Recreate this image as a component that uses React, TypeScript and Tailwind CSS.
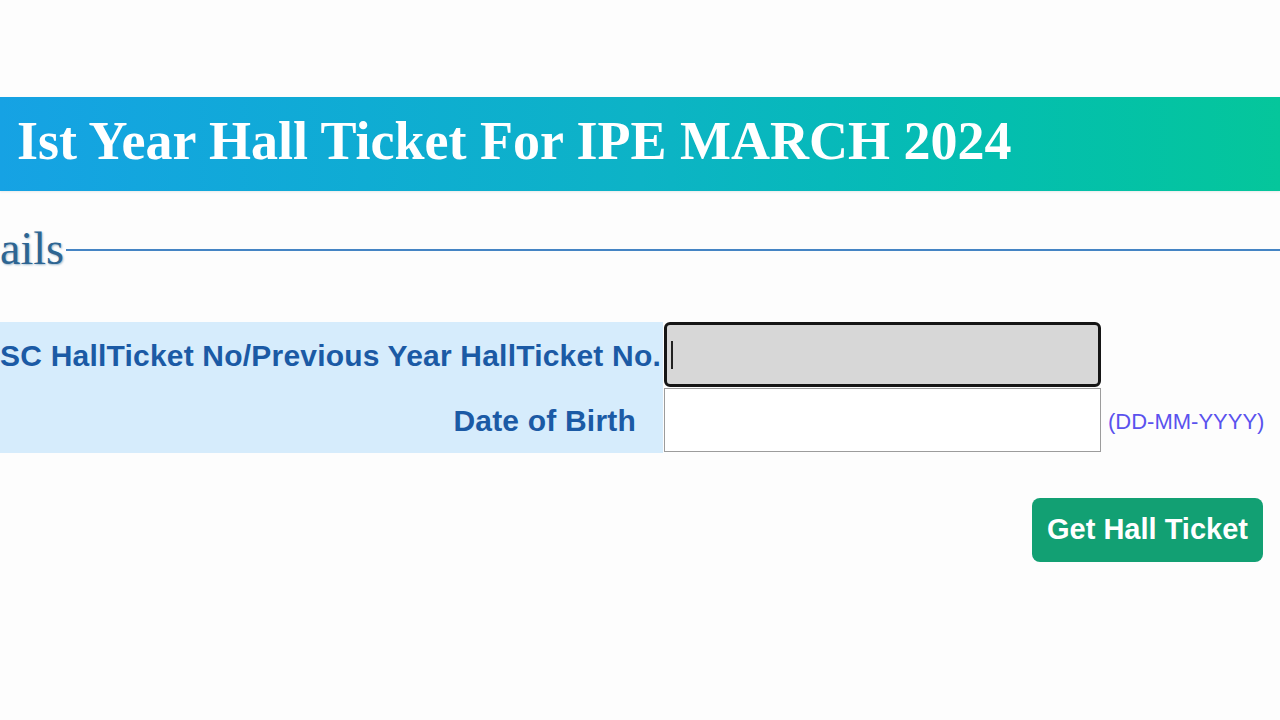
import React from "react";

export default function App() {
  return (
    <div className="w-[1280px] h-[720px] overflow-hidden bg-[#fdfdfd] pt-[97px]">
      <div className="h-[94px] flex items-center pl-[17px] pb-[6px] bg-gradient-to-r from-[#16a2e4] via-[#0db3c6] to-[#05c69b] shadow-[0_1px_2px_rgba(0,0,0,0.08)]">
        <h1
          className="text-white font-bold text-[54px] leading-none whitespace-nowrap"
          style={{ fontFamily: '"Liberation Serif", "DejaVu Serif", serif' }}
        >
          Ist Year Hall Ticket For IPE MARCH 2024
        </h1>
      </div>

      <div className="mt-[36px] flex items-center h-[46px]">
        <div className="w-[66px] flex justify-start shrink-0">
          <span
            className="text-[46px] leading-none text-[#2d6592] whitespace-nowrap pb-[2px] [text-shadow:1px_1px_2px_rgba(45,101,146,0.45)]"
            style={{ fontFamily: '"Liberation Serif", serif' }}
          >
            ails
          </span>
        </div>
        <div className="flex-1 h-[2px] bg-[#4584c4]" />
      </div>

      <div className="mt-[49px] flex">
        <div
          className="w-[663px] shrink-0 bg-[#d6ecfc] flex flex-col font-bold text-[#1b5aa5] text-[30px] tracking-[0.2px]"
          style={{ fontFamily: '"Liberation Sans", Arial, sans-serif' }}
        >
          <div className="h-[66px] flex items-center justify-end pr-[2px] whitespace-nowrap">
            SC HallTicket No/Previous Year HallTicket No.
          </div>
          <div className="h-[65px] flex items-center justify-end pr-[27px] whitespace-nowrap">
            Date of Birth
          </div>
        </div>
        <div className="flex flex-col">
          <div className="ml-[1px] w-[437px] h-[65px] rounded-[6px] border-[3px] border-[#151515] bg-[#d7d7d7] flex items-center pl-[4px]">
            <div className="w-[2px] h-[28px] bg-[#222]" />
          </div>
          <div className="flex items-center">
            <div className="ml-[1px] mt-[1px] w-[437px] h-[64px] border border-[#9c9c9c] bg-white" />
            <span
              className="ml-[7px] mt-[3px] text-[22px] text-[#5a52ee] whitespace-nowrap"
              style={{ fontFamily: '"Liberation Sans", Arial, sans-serif' }}
            >
              (DD-MM-YYYY)
            </span>
          </div>
        </div>
      </div>

      <div className="mt-[45px] flex justify-end pr-[17px]">
        <button
          className="w-[231px] h-[64px] rounded-[8px] bg-[#12a073] text-white font-bold text-[29px] flex items-center justify-center"
          style={{ fontFamily: '"Liberation Sans", Arial, sans-serif' }}
        >
          Get Hall Ticket
        </button>
      </div>
    </div>
  );
}
